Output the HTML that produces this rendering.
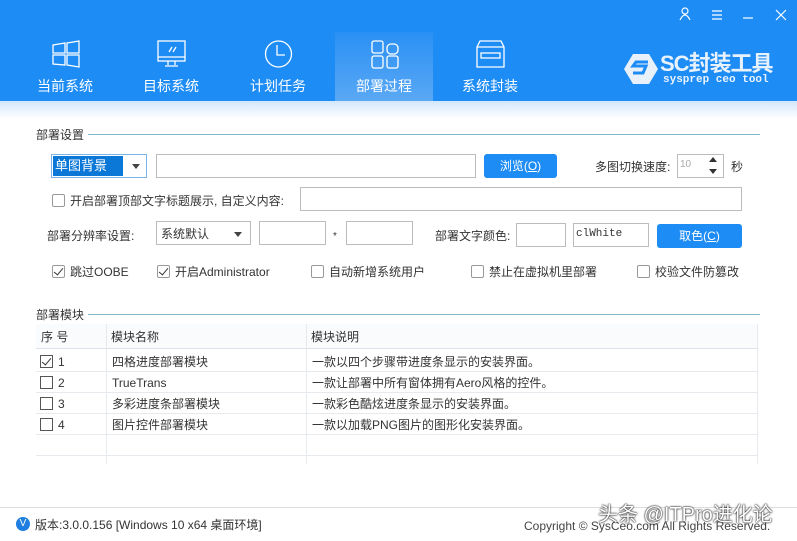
<!DOCTYPE html>
<html><head><meta charset="utf-8"><style>
*{margin:0;padding:0;box-sizing:border-box}
body{width:797px;height:541px;overflow:hidden;background:#fff;font-family:"Liberation Sans","Noto Sans CJK SC",sans-serif;font-size:12px;color:#333;position:relative}
.a{position:absolute}
.hdr{left:0;top:0;width:797px;height:101px;background:#1e8cf5}
.band{left:0;top:101px;width:797px;height:18px;background:linear-gradient(#d2e7fc,#fff)}
.tab{top:32px;height:69px;width:100px;text-align:center;color:#fff;font-size:14px;line-height:18px}
.tab svg{position:absolute;left:36px;top:8px}
.tab span{position:absolute;left:0;right:0;top:45px}
.act{background:linear-gradient(#2a90f4,#5aa8f4)}
.sec{font-size:12px;color:#333;background:#fff;padding-right:4px}
.line{height:1px;background:#7fb7cc}
.inp{border:1px solid #bcbcbc;background:#fff;height:24px}
.btn{background:#1e8cf5;color:#fff;border-radius:3px;text-align:center;font-size:12px;line-height:24px;height:24px}
.cb{width:13px;height:13px;border:1px solid #999;background:#fff;border-radius:2px}
.chk::after{content:"";position:absolute;left:3px;top:0px;width:4px;height:8px;border:solid #333;border-width:0 1.5px 1.5px 0;transform:rotate(40deg)}
.t{white-space:nowrap;line-height:16px}
.row{left:36px;width:722px;height:1px;background:#e6e9ee}
.vl{width:1px;background:#e6e9ee}
</style></head><body>
<div class="a hdr"></div>
<div class="a band"></div>
<svg class="a" style="left:676px;top:6px" width="115" height="18" stroke="#fff" fill="none" stroke-width="1.2">
<circle cx="9" cy="5" r="3"/><path d="M4 14 Q9 4 14 14"/>
<path d="M36 5h10M36 9h10M36 13h10"/>
<path d="M67 12h10"/>
<path d="M100 4l10 10M110 4l-10 10"/>
</svg>
<div class="a tab" style="left:15px"><svg width="30" height="30" stroke="#fff" fill="none" stroke-width="1.3"><path d="M2 5l12-2v10H2zM16 3l12-2v12H16zM2 15h12v10L2 24zM16 15h12v12l-12-2z"/></svg><span>当前系统</span></div>
<div class="a tab" style="left:121px"><svg width="30" height="30" stroke="#fff" fill="none" stroke-width="1.3"><rect x="1" y="1" width="27" height="20"/><path d="M1 17h27M11 21v4M18 21v4M8 26h13M12 12l3-5M16 12l3-5"/></svg><span>目标系统</span></div>
<div class="a tab" style="left:228px"><svg width="30" height="30" stroke="#fff" fill="none" stroke-width="1.3"><circle cx="14.5" cy="14" r="13"/><path d="M13 5v10h8"/></svg><span>计划任务</span></div>
<div class="a tab act" style="left:335px;width:98px"><svg width="30" height="30" stroke="#fff" fill="none" stroke-width="1.3"><rect x="1" y="1" width="11" height="12" rx="2"/><rect x="16" y="4" width="11" height="10" rx="4"/><rect x="1" y="16" width="11" height="12" rx="2"/><rect x="16" y="16" width="11" height="12" rx="2"/></svg><span>部署过程</span></div>
<div class="a tab" style="left:440px"><svg width="30" height="30" stroke="#fff" fill="none" stroke-width="1.3"><path d="M4 1h21l3 6v20H1V7zM1 7h27"/><rect x="5" y="13" width="19" height="5"/></svg><span>系统封装</span></div>
<svg class="a" style="left:624px;top:53px" width="34" height="32"><path d="M9 1h16l9 15-9 15H9L0 16z" fill="#e8f0fa"/><path d="M24 9h-12l-3 4h13l-3 7H9" stroke="#1e8cf5" stroke-width="3" fill="none"/></svg>
<div class="a t" style="left:660px;top:52px;color:#e8f2fd;font-size:22px;line-height:24px;font-weight:bold;letter-spacing:-1px">SC封装工具</div>
<div class="a t" style="left:663px;top:75px;color:#e8f2fd;font-family:'Liberation Mono',monospace;font-size:11px;line-height:11px;font-weight:bold">sysprep ceo tool</div>
<div class="a line" style="left:36px;top:134px;width:724px"></div>
<div class="a sec t" style="left:36px;top:127px">部署设置</div>
<div class="a" style="left:51px;top:154px;width:96px;height:24px;border:1px solid #7ab4e8;background:#fff"></div>
<div class="a t" style="left:53px;top:156px;width:70px;height:20px;background:#0b78d7;color:#fff;font-size:13px;line-height:20px;padding-left:2px">单图背景</div>
<div class="a" style="left:132px;top:164px;border:4px solid transparent;border-top:5px solid #444"></div>
<div class="a inp" style="left:156px;top:154px;width:320px"></div>
<div class="a btn" style="left:484px;top:154px;width:73px">浏览(<u>O</u>)</div>
<div class="a t" style="left:595px;top:159px">多图切换速度:</div>
<div class="a inp" style="left:677px;top:154px;width:47px;color:#aaa;font-size:10px;padding:4px 2px">10</div>
<div class="a" style="left:709px;top:157px;border:4px solid transparent;border-bottom:5px solid #333;border-top:0"></div>
<div class="a" style="left:709px;top:169px;border:4px solid transparent;border-top:5px solid #333;border-bottom:0"></div>
<div class="a t" style="left:731px;top:159px">秒</div>
<div class="a cb" style="left:52px;top:194px"></div>
<div class="a t" style="left:70px;top:193px">开启部署顶部文字标题展示, 自定义内容:</div>
<div class="a inp" style="left:300px;top:187px;width:442px"></div>
<div class="a t" style="left:47px;top:228px">部署分辨率设置:</div>
<div class="a inp" style="left:156px;top:221px;width:95px;padding:3px 4px;font-size:12px">系统默认</div>
<div class="a" style="left:234px;top:232px;border:4px solid transparent;border-top:5px solid #444"></div>
<div class="a inp" style="left:259px;top:221px;width:67px"></div>
<div class="a t" style="left:333px;top:229px;font-size:10px">*</div>
<div class="a inp" style="left:346px;top:221px;width:67px"></div>
<div class="a t" style="left:435px;top:228px">部署文字颜色:</div>
<div class="a inp" style="left:516px;top:223px;width:50px"></div>
<div class="a inp" style="left:573px;top:223px;width:76px;font-family:'Liberation Mono',monospace;font-size:11px;padding:4px 2px">clWhite</div>
<div class="a btn" style="left:657px;top:224px;width:85px">取色(<u>C</u>)</div>
<div class="a cb chk" style="left:52px;top:265px"></div><div class="a t" style="left:70px;top:264px">跳过OOBE</div>
<div class="a cb chk" style="left:157px;top:265px"></div><div class="a t" style="left:175px;top:264px">开启Administrator</div>
<div class="a cb" style="left:311px;top:265px"></div><div class="a t" style="left:329px;top:264px">自动新增系统用户</div>
<div class="a cb" style="left:471px;top:265px"></div><div class="a t" style="left:489px;top:264px">禁止在虚拟机里部署</div>
<div class="a cb" style="left:637px;top:265px"></div><div class="a t" style="left:655px;top:264px">校验文件防篡改</div>
<div class="a line" style="left:36px;top:314px;width:724px"></div>
<div class="a sec t" style="left:36px;top:307px">部署模块</div>
<div class="a" style="left:36px;top:324px;width:722px;height:24px;background:#fafbfc"></div>
<div class="a row" style="top:348px;background:#dde2e8"></div>
<div class="a row" style="top:371px"></div>
<div class="a row" style="top:392px"></div>
<div class="a row" style="top:413px"></div>
<div class="a row" style="top:434px"></div>
<div class="a row" style="top:455px"></div>
<div class="a vl" style="left:106px;top:324px;height:140px"></div>
<div class="a vl" style="left:306px;top:324px;height:140px"></div>
<div class="a vl" style="left:757px;top:324px;height:140px"></div>
<div class="a t" style="left:41px;top:329px">序 号</div>
<div class="a t" style="left:111px;top:329px">模块名称</div>
<div class="a t" style="left:311px;top:329px">模块说明</div>
<div class="a cb chk" style="left:40px;top:355px;border-radius:0;border-color:#555"></div><div class="a t" style="left:58px;top:354px">1</div>
<div class="a cb" style="left:40px;top:376px;border-radius:0;border-color:#555"></div><div class="a t" style="left:58px;top:375px">2</div>
<div class="a cb" style="left:40px;top:397px;border-radius:0;border-color:#555"></div><div class="a t" style="left:58px;top:396px">3</div>
<div class="a cb" style="left:40px;top:418px;border-radius:0;border-color:#555"></div><div class="a t" style="left:58px;top:417px">4</div>
<div class="a t" style="left:112px;top:354px">四格进度部署模块</div>
<div class="a t" style="left:112px;top:375px">TrueTrans</div>
<div class="a t" style="left:112px;top:396px">多彩进度条部署模块</div>
<div class="a t" style="left:112px;top:417px">图片控件部署模块</div>
<div class="a t" style="left:312px;top:354px">一款以四个步骤带进度条显示的安装界面。</div>
<div class="a t" style="left:312px;top:375px">一款让部署中所有窗体拥有Aero风格的控件。</div>
<div class="a t" style="left:312px;top:396px">一款彩色酷炫进度条显示的安装界面。</div>
<div class="a t" style="left:312px;top:417px">一款以加载PNG图片的图形化安装界面。</div>
<div class="a" style="left:0;top:507px;width:797px;height:1px;background:#ddd"></div>
<div class="a" style="left:16px;top:517px;width:14px;height:14px;border-radius:50%;background:#1e7fe0;color:#fff;font-size:10px;text-align:center;line-height:14px">V</div>
<div class="a t" style="left:35px;top:517px;color:#333">版本:3.0.0.156 [Windows 10 x64 桌面环境]</div>
<div class="a t" style="left:524px;top:518px;color:#444">Copyright © SysCeo.com All Rights Reserved.</div>
<div class="a t" style="left:598px;top:503px;color:#fff;font-size:20px;line-height:24px;text-shadow:0 0 2px #000,0 0 1px #000">头条 @ITPro进化论</div>
</body></html>
